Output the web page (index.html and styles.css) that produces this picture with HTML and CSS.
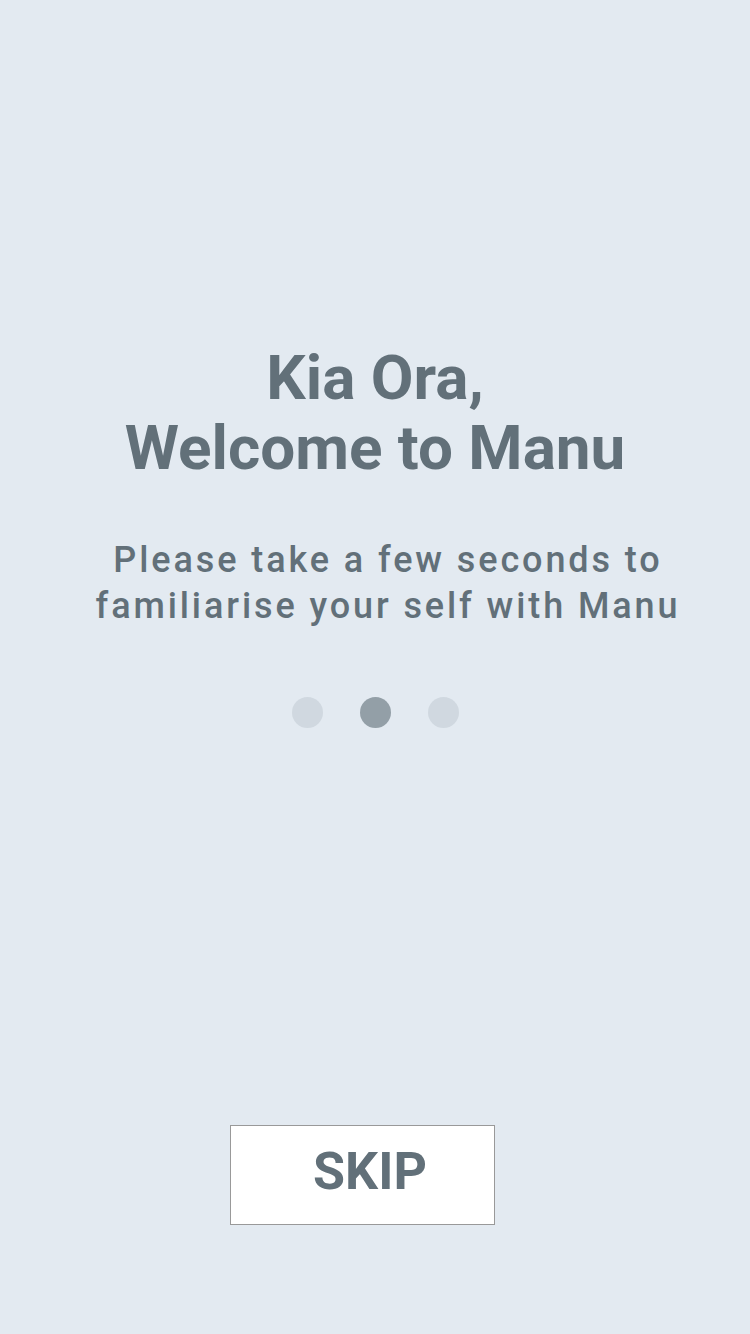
FILE: index.html
```html
<!DOCTYPE html>
<html>
<head>
<meta charset="utf-8">
<link rel="stylesheet" href="styles.css">
</head>
<body>
<div class="screen">
  <div class="intro">
    <h1 class="title">Kia Ora,<br>Welcome to Manu</h1>
    <p class="subtitle">Please take a few seconds to<br>familiarise your self with Manu</p>
    <div class="dots">
      <span class="dot"></span>
      <span class="dot active"></span>
      <span class="dot"></span>
    </div>
  </div>
  <div class="footer">
    <button class="skip">SKIP</button>
  </div>
</div>
</body>
</html>
```
FILE: styles.css
```css
html, body {
  margin: 0;
  padding: 0;
}
body {
  background: #e3eaf1;
  font-family: Roboto, "Liberation Sans", sans-serif;
  color: #627079;
}
.screen {
  width: 750px;
  height: 1334px;
  display: flex;
  flex-direction: column;
  align-items: center;
}
.intro {
  padding-top: 343px;
  display: flex;
  flex-direction: column;
  align-items: center;
}
.title {
  margin: 0;
  font-size: 62px;
  line-height: 70px;
  font-weight: 700;
  text-align: center;
}
.subtitle {
  margin: 54px 0 0 26px;
  font-size: 36px;
  line-height: 46px;
  font-weight: 500;
  letter-spacing: 2.9px;
  text-align: center;
}
.dots {
  margin: 68px 0 0 2px;
  display: flex;
  gap: 37px;
}
.dot {
  width: 31px;
  height: 31px;
  border-radius: 50%;
  background: #d0d8e0;
}
.dot.active {
  background: #939fa7;
}
.footer {
  margin-top: auto;
  padding-bottom: 109px;
  padding-right: 26px;
}
.skip {
  width: 265px;
  height: 100px;
  background: #fff;
  border: 1px solid #999;
  font-family: Roboto, "Liberation Sans", sans-serif;
  font-weight: 700;
  font-size: 52px;
  color: #627079;
  padding: 0 0 8px 16px;
}
```
